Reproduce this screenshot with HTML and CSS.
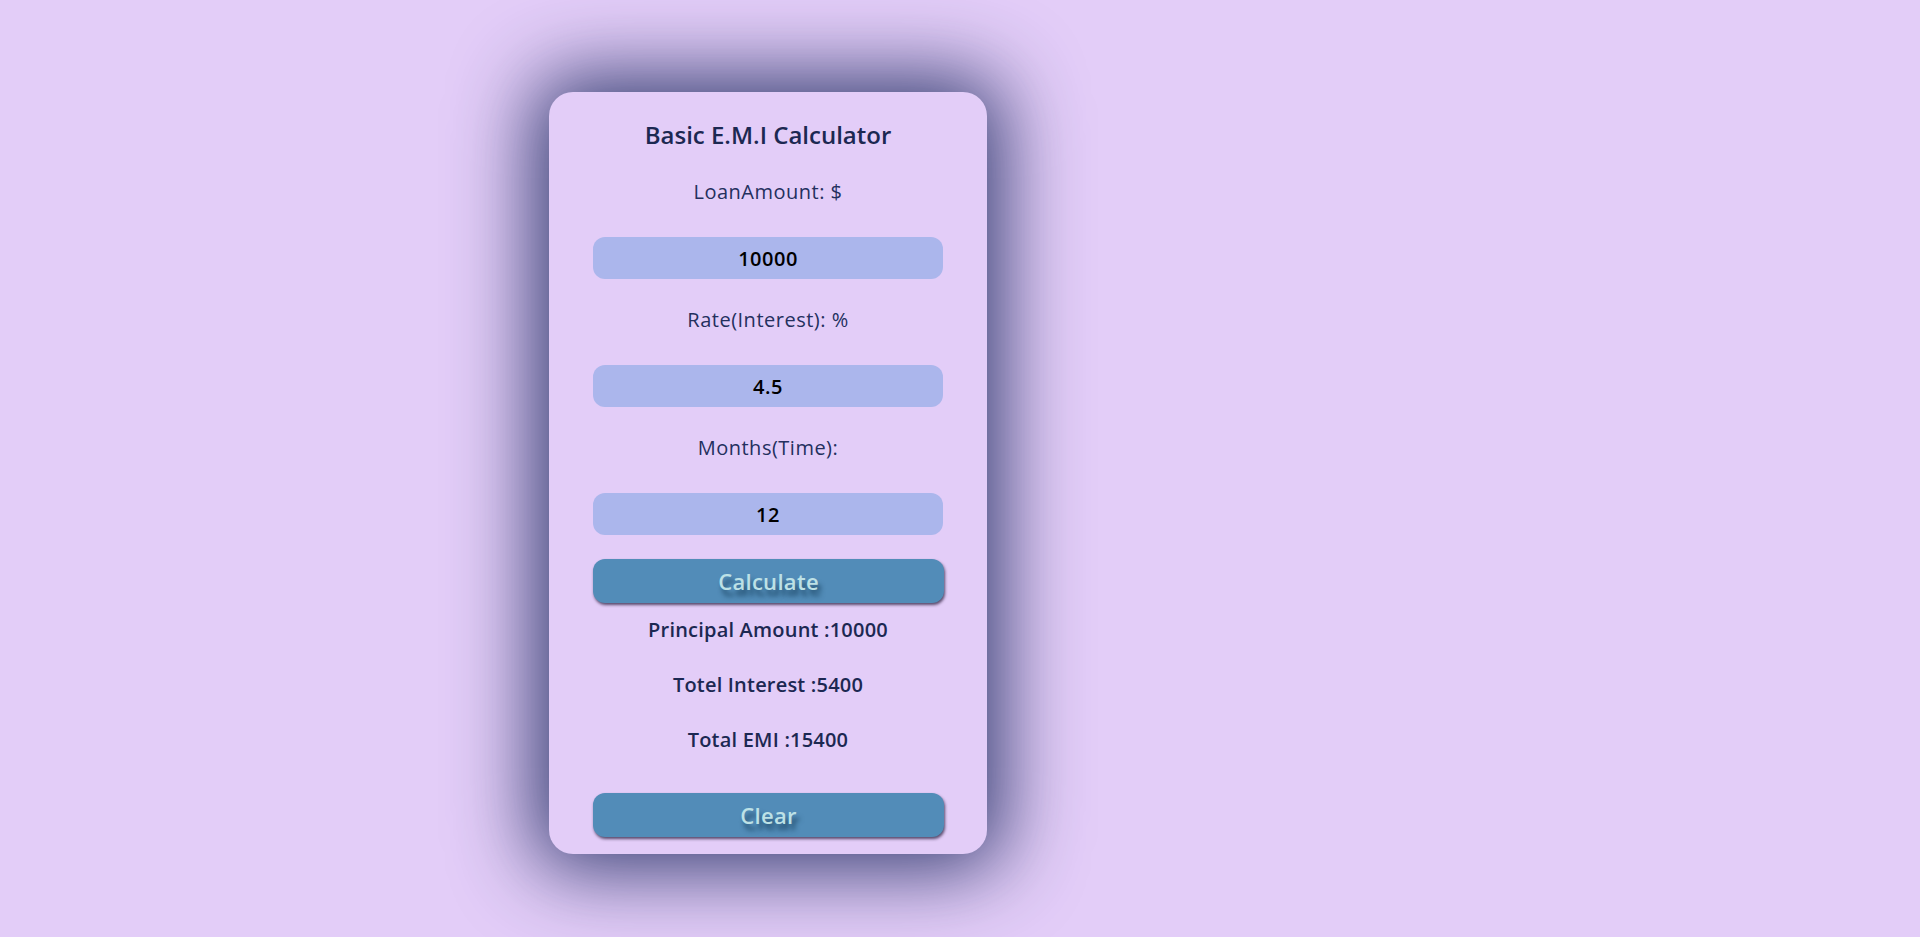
FILE: index.html
```html
<!DOCTYPE html>
<html lang="en">
<head>
<meta charset="utf-8">
<title>Basic E.M.I Calculator</title>
<link rel="stylesheet" href="styles.css">
</head>
<body>
<div class="page">
  <div class="card">
    <h2 class="title">Basic E.M.I Calculator</h2>
    <p class="label">LoanAmount: $</p>
    <input class="field" type="text" value="10000">
    <p class="label">Rate(Interest): %</p>
    <input class="field" type="text" value="4.5">
    <p class="label">Months(Time):</p>
    <input class="field" type="text" value="12">
    <button class="btn btn-calc" type="button">Calculate</button>
    <p class="result result-first">Principal Amount :10000</p>
    <p class="result">Totel Interest :5400</p>
    <p class="result">Total EMI :15400</p>
    <button class="btn btn-clear" type="button">Clear</button>
  </div>
</div>
</body>
</html>
```
FILE: styles.css
```css
* { box-sizing: border-box; }
html, body {
  margin: 0;
  height: 100%;
  background: #e3cdf8;
  font-family: "Open Sans", "Noto Sans", sans-serif;
}
.page {
  padding: 92px 0 0 549px;
  display: flex;
  align-items: flex-start;
}
.card {
  width: 438px;
  height: 762px;
  background: #e3cdf8;
  border-radius: 24px;
  padding: 28px 44px 17px;
  display: flex;
  flex-direction: column;
  align-items: stretch;
  box-shadow: 0 0 80px 16px rgba(36, 48, 100, 0.9);
}
.title {
  margin: 0;
  height: 30px;
  line-height: 30px;
  text-align: center;
  font-size: 24px;
  font-weight: 600;
  color: #1c2852;
}
.label {
  margin: 27px 0 0;
  height: 30px;
  line-height: 30px;
  text-align: center;
  font-size: 20px;
  font-weight: 400;
  letter-spacing: 0.5px;
  color: #24305e;
}
.label + .field { margin-top: 30px; }
.field + .label { margin-top: 26px; }
.field {
  display: block;
  width: 100%;
  height: 42px;
  border: none;
  outline: none;
  border-radius: 12px;
  background: #abb6ec;
  text-align: center;
  font-family: inherit;
  font-size: 20px;
  font-weight: 600;
  letter-spacing: 0.5px;
  color: #000;
  padding: 0;
}
.btn {
  display: block;
  width: 351px;
  height: 44px;
  border: none;
  border-radius: 12px;
  background: #528cb8;
  color: #bde1e6;
  font-family: inherit;
  font-size: 22px;
  font-weight: 600;
  letter-spacing: 0.3px;
  padding: 0;
  box-shadow: 1px 2px 3px rgba(40, 30, 60, 0.75);
  text-shadow: 3px 6px 5px #1d4766;
  cursor: pointer;
}
.btn-calc { margin-top: 24px; }
.btn-clear { margin-top: 38px; }
.result {
  margin: 25px 0 0;
  height: 30px;
  line-height: 30px;
  text-align: center;
  font-size: 20px;
  font-weight: 600;
  letter-spacing: 0.2px;
  color: #1c2852;
}
.result-first { margin-top: 12px; }
```
